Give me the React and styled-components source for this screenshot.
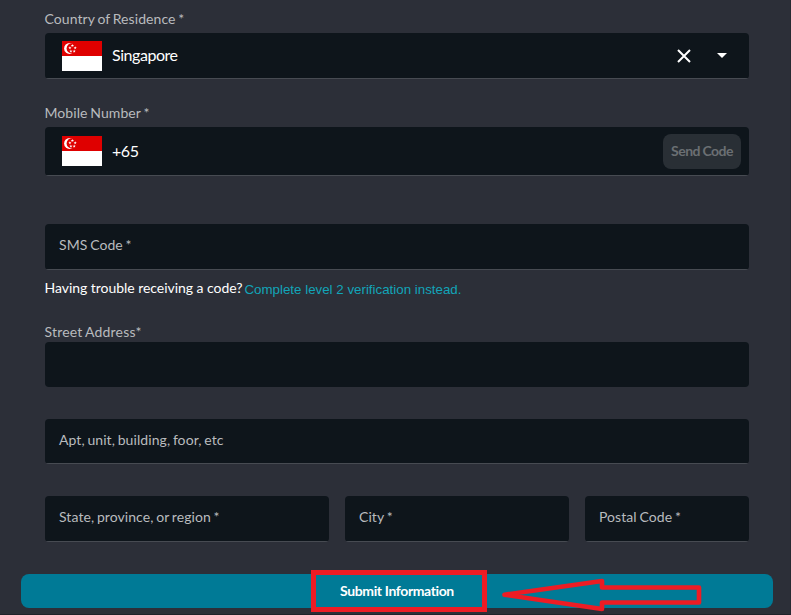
import React from "react";
import styled, { createGlobalStyle } from "styled-components";

const GlobalStyle = createGlobalStyle`
  * { box-sizing: border-box; }
  html, body { margin: 0; background: #2c2f38; }
  body { overflow: hidden; font-family: Lato, sans-serif; }
  button { font-family: inherit; border: 0; padding: 0; cursor: pointer; }
`;

const Page = styled.main`
  width: 791px;
  height: 615px;
  background: #2c2f38;
  overflow: hidden;
  border-right: 1px solid #272a32;
  border-bottom: 1px solid #1f222a;
`;

const Form = styled.form`
  display: flex;
  flex-direction: column;
  padding: 10px 41px 0 45px;
`;

const Label = styled.label`
  font-size: 14px;
  line-height: 18px;
  height: ${(p) => p.$height}px;
  margin-top: ${(p) => p.$top || 0}px;
  margin-left: -0.5px;
  color: #b9bbbe;
  letter-spacing: ${(p) => p.$spacing || 0.07}px;
  word-spacing: -0.9px;
`;

const Field = styled.div`
  display: flex;
  align-items: center;
  height: ${(p) => p.$height}px;
  margin-top: ${(p) => p.$top || 0}px;
  padding-left: ${(p) => (p.$picker ? 17 : 14)}px;
  padding-bottom: ${(p) => (p.$picker ? 1 : 0)}px;
  border-radius: 4px;
  background: linear-gradient(#474b52, #474b52) bottom / 100% ${(p) => (p.$plain ? 0 : 1)}px no-repeat, #0e151b;
`;

const Placeholder = styled.span`
  font-size: 14px;
  line-height: 18px;
  color: #b9bbbe;
  padding-bottom: 4px;
  letter-spacing: ${(p) => p.$spacing || 0.07}px;
  word-spacing: -0.9px;
`;

const Value = styled.span`
  flex: 1;
  margin-left: 10px;
  padding-bottom: 1px;
  font-size: 16px;
  line-height: 20px;
  color: #fff;
  letter-spacing: -0.45px;
`;

const FlagIcon = styled.svg`
  display: block;
  width: 40px;
  height: 30px;
`;

const ClearButton = styled.button`
  display: flex;
  background: none;
  margin-right: 26px;
`;

const ToggleButton = styled.button`
  display: flex;
  background: none;
  margin-right: 22px;
`;

const SendButton = styled.button`
  width: 78px;
  height: 35px;
  margin-right: 8px;
  padding-bottom: 1px;
  border-radius: 8px;
  background: #292f35;
  color: #6b6f73;
  font-size: 14px;
  font-weight: 700;
  letter-spacing: -0.5px;
  word-spacing: -0.5px;
`;

const Help = styled.p`
  display: flex;
  margin: 9px 0 0 -0.5px;
  height: 20px;
  font-size: 14px;
  line-height: 18px;
  color: #fff;
  letter-spacing: -0.04px;
`;

const HelpLink = styled.a`
  margin: 2px 0 0 2px;
  font-family: "Liberation Sans", Arial, sans-serif;
  font-size: 13.33px;
  letter-spacing: 0;
  color: #12a5b9;
`;

const Row = styled.div`
  display: grid;
  grid-template-columns: 284px 224px 164px;
  gap: 16px;
  margin-top: 32px;
`;

const SubmitBar = styled.div`
  position: relative;
  margin: 32px 17px 0 21px;
`;

const SubmitButton = styled.button`
  display: block;
  width: 100%;
  height: 34px;
  padding-bottom: 1px;
  border-radius: 8px;
  background: #007a96;
  color: #fff;
  font-size: 14px;
  font-weight: 700;
  letter-spacing: -0.38px;
`;

const Highlight = styled.div`
  position: absolute;
  left: 290px;
  top: -4px;
  width: 176px;
  height: 42px;
  border: 5px solid #ed1c24;
  pointer-events: none;
`;

const Arrow = styled.svg`
  position: absolute;
  left: 480px;
  top: 3px;
  pointer-events: none;
`;

function SingaporeFlag() {
  return (
    <FlagIcon viewBox="0 0 40 30" aria-label="Singapore">
      <path fill="#fff" d="M0 0h40v30H0z" />
      <path fill="#df0000" d="M0 0h40v15H0z" />
      <circle cx="7.6" cy="7.4" r="5.5" fill="#fff" />
      <circle cx="9.7" cy="7.4" r="5.1" fill="#df0000" />
      <g fill="#fff">
        {[[10.4, 4.6], [7.9, 6.8], [13.2, 6.8], [8.9, 10.2], [12.2, 10.2]].map(([x, y]) => (
          <path key={`${x}-${y}`} transform={`translate(${x} ${y})`} d="M0-1.6.4-.5 1.6-.5.6.3 1 1.4 0 .7-1 1.4-.6.3-1.6-.5-.4-.5Z" />
        ))}
      </g>
    </FlagIcon>
  );
}

export default function App() {
  return (
    <Page>
      <GlobalStyle />
      <Form onSubmit={(e) => e.preventDefault()}>
        <Label $height={23}>Country of Residence *</Label>
        <Field $height={46} $picker>
          <SingaporeFlag />
          <Value>Singapore</Value>
          <ClearButton type="button" aria-label="Clear">
            <svg width="14" height="14" viewBox="0 0 14 14">
              <path d="M1 1l12 12M13 1L1 13" stroke="#fff" strokeWidth="2" />
            </svg>
          </ClearButton>
          <ToggleButton type="button" aria-label="Open">
            <svg width="10" height="5" viewBox="0 0 10 5">
              <path d="M0 0h10L5 5z" fill="#fff" />
            </svg>
          </ToggleButton>
        </Field>

        <Label $top={25} $height={23}>Mobile Number *</Label>
        <Field $height={49} $picker>
          <SingaporeFlag />
          <Value>+65</Value>
          <SendButton type="button">Send Code</SendButton>
        </Field>

        <Field $top={48} $height={46}>
          <Placeholder>SMS Code *</Placeholder>
        </Field>
        <Help>
          Having trouble receiving a code?
          <HelpLink>Complete level 2 verification instead.</HelpLink>
        </Help>

        <Label $top={24} $height={19} $spacing={0.2}>Street Address*</Label>
        <Field $height={45} $plain />
        <Field $top={32} $height={45}>
          <Placeholder>Apt, unit, building, foor, etc</Placeholder>
        </Field>
        <Row>
          <Field $height={46}><Placeholder>State, province, or region *</Placeholder></Field>
          <Field $height={46}><Placeholder>City *</Placeholder></Field>
          <Field $height={46}><Placeholder>Postal Code *</Placeholder></Field>
        </Row>
      </Form>
      <SubmitBar>
        <SubmitButton type="button">Submit Information</SubmitButton>
        <Highlight />
        <Arrow width="204" height="36" viewBox="0 0 204 36">
          <path d="M3.5 17.7L101 4V10.5H198V25.5H101V32Z" fill="none" stroke="#ed1c24" strokeWidth="4.6" strokeLinejoin="round" />
        </Arrow>
      </SubmitBar>
    </Page>
  );
}
